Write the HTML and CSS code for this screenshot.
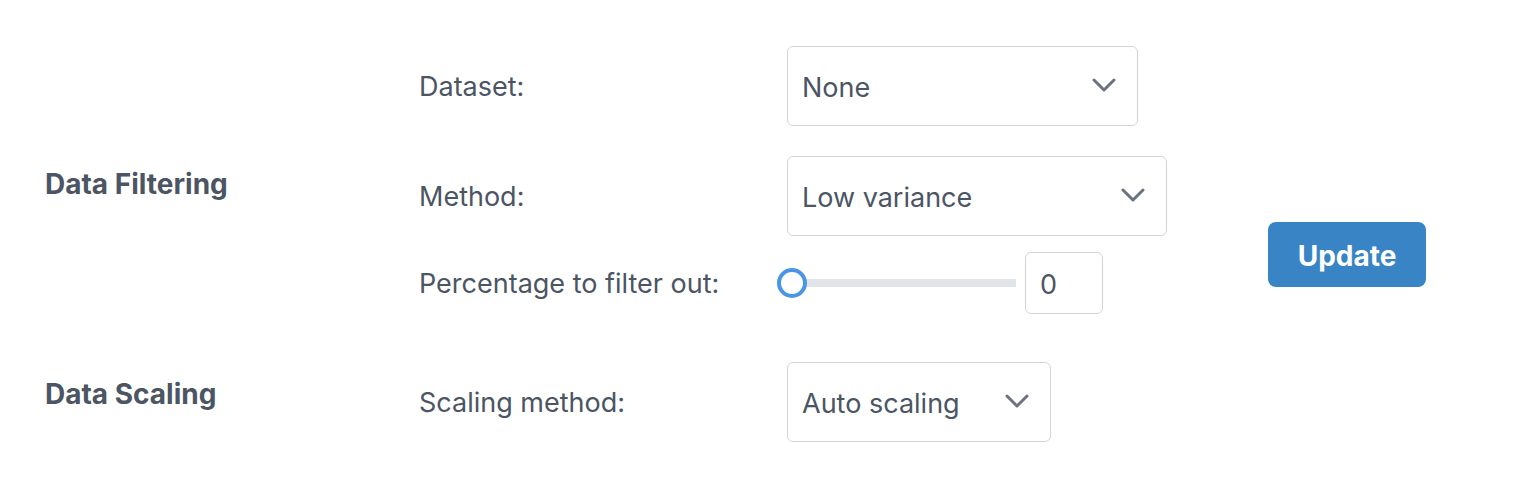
FILE: index.html
```html
<!DOCTYPE html>
<html lang="en">
<head>
<meta charset="utf-8">
<title>Preprocessing settings</title>
<link rel="stylesheet" href="styles.css">
</head>
<body>
<main class="settings">
  <section class="group">
    <h3 class="group-title">Data Filtering</h3>
    <div class="fields">
      <div class="field">
        <label class="field-label" for="dataset">Dataset:</label>
        <div class="select w-dataset">
          <select id="dataset"><option>None</option></select>
          <svg class="chevron" viewBox="0 0 24 14" aria-hidden="true"><path d="M2 2l10 10L22 2"/></svg>
        </div>
      </div>
      <div class="field">
        <label class="field-label" for="method">Method:</label>
        <div class="select w-method">
          <select id="method"><option>Low variance</option></select>
          <svg class="chevron" viewBox="0 0 24 14" aria-hidden="true"><path d="M2 2l10 10L22 2"/></svg>
        </div>
      </div>
      <div class="field field-slider">
        <label class="field-label" for="pct">Percentage to filter out:</label>
        <input class="range" id="pct" type="range" min="0" max="100" value="0">
        <input class="number" type="text" value="0" aria-label="Percentage">
      </div>
    </div>
    <button class="btn-update" type="button">Update</button>
  </section>

  <section class="group group-scaling">
    <h3 class="group-title">Data Scaling</h3>
    <div class="fields">
      <div class="field">
        <label class="field-label" for="scaling">Scaling method:</label>
        <div class="select w-scaling">
          <select id="scaling"><option>Auto scaling</option></select>
          <svg class="chevron" viewBox="0 0 24 14" aria-hidden="true"><path d="M2 2l10 10L22 2"/></svg>
        </div>
      </div>
    </div>
  </section>
</main>
</body>
</html>
```

FILE: styles.css
```css
* {
  box-sizing: border-box;
}

html, body {
  margin: 0;
  background: #ffffff;
}

body {
  font-family: Inter, "Noto Sans", "Liberation Sans", sans-serif;
  color: #4b5563;
  font-size: 27px;
}

.settings {
  padding: 46px 0 0 45px;
}

.group {
  display: flex;
  align-items: center;
}

.group-scaling {
  margin-top: 48px;
}

.group-title {
  width: 374px;
  flex: none;
  margin: 0 0 -8px;
  font-size: 28px;
  font-weight: 700;
  color: #4b5563;
}

.group-scaling .group-title {
  margin-bottom: 16px;
}

.fields {
  width: 748px;
  flex: none;
  display: flex;
  flex-direction: column;
}

.field {
  display: flex;
  align-items: center;
}

.field + .field {
  margin-top: 30px;
}

.field.field-slider {
  margin-top: 16px;
}

.field-label {
  width: 368px;
  flex: none;
  padding-top: 3px;
  font-size: 27px;
  line-height: 1.2;
}

.select {
  position: relative;
  height: 80px;
}

.w-dataset { width: 351px; }
.w-method { width: 380px; }
.w-scaling { width: 264px; }

.select select {
  appearance: none;
  -webkit-appearance: none;
  width: 100%;
  height: 100%;
  margin: 0;
  padding: 2px 56px 0 14px;
  border: 1px solid #d1d5db;
  border-radius: 6px;
  background: #ffffff;
  font: inherit;
  font-size: 27px;
  color: #4b5563;
}

.chevron {
  position: absolute;
  right: 22px;
  top: 50%;
  width: 24px;
  height: 14px;
  margin-top: -8px;
  fill: none;
  stroke: #6b7280;
  stroke-width: 3;
  stroke-linecap: round;
  stroke-linejoin: round;
  pointer-events: none;
}

.range {
  -webkit-appearance: none;
  appearance: none;
  width: 239px;
  height: 32px;
  margin: 0 9px 0 -10px;
  padding: 0;
  background: transparent;
}

.range::-webkit-slider-runnable-track {
  height: 8px;
  background: #e1e4e8;
  border: none;
}

.range::-webkit-slider-thumb {
  -webkit-appearance: none;
  width: 30px;
  height: 30px;
  margin-top: -11px;
  border-radius: 50%;
  background: #ffffff;
  border: 4px solid #4a96e6;
}

.number {
  width: 78px;
  height: 62px;
  padding: 2px 14px 0;
  border: 1px solid #d1d5db;
  border-radius: 6px;
  font: inherit;
  font-size: 27px;
  color: #4b5563;
  background: #ffffff;
}

.btn-update {
  align-self: flex-end;
  margin: 0 0 27px 101px;
  width: 158px;
  height: 65px;
  padding-top: 3px;
  border: none;
  border-radius: 8px;
  background: #3884c4;
  color: #ffffff;
  font: inherit;
  font-size: 28px;
  font-weight: 700;
}
```
